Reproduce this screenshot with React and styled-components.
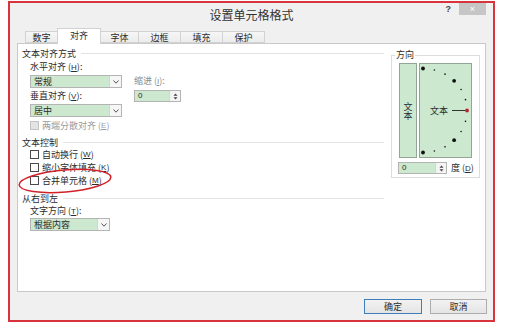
import React from "react";
import styled, { createGlobalStyle } from "styled-components";

const GREEN = "#cce8cf";

const GlobalStyle = createGlobalStyle`
  html, body {
    margin: 0;
    background: #ffffff;
  }
  body {
    font-family: "Noto Sans CJK SC", "Liberation Sans", sans-serif;
    color: #2b2b2b;
  }
`;

const Page = styled.div`
  width: 512px;
  height: 328px;
  padding: 1px 0 0 8px;
  box-sizing: border-box;
`;

const Dialog = styled.div`
  width: 487px;
  height: 321px;
  box-sizing: border-box;
  border: 2px solid #d7353b;
  background: #f0f0f0;
  display: flex;
  flex-direction: column;
`;

const TitleBar = styled.div`
  height: 22px;
  display: grid;
  grid-template-columns: 1fr auto 1fr;
  align-items: start;
`;

const Title = styled.div`
  grid-column: 2;
  font-size: 12px;
  line-height: 12px;
  margin-top: 6px;
  color: #333;
`;

const TitleTools = styled.div`
  grid-column: 3;
  display: flex;
  justify-content: flex-end;
  align-items: flex-start;
  margin-right: 7px;
`;

const Help = styled.span`
  font-family: "Liberation Sans", sans-serif;
  font-weight: bold;
  font-size: 9px;
  line-height: 12px;
  color: #444;
  margin-right: 8px;
`;

const CloseBtn = styled.div`
  width: 27px;
  height: 12px;
  background: #c6c6c6;
  color: #ffffff;
  font-family: "Liberation Sans", sans-serif;
  font-size: 9px;
  line-height: 12px;
  text-align: center;
`;

const TabRow = styled.div`
  display: flex;
  align-items: flex-end;
  height: 15px;
  margin: 3px 0 0 15px;
`;

const Tab = styled.div`
  width: ${(p) => p.$w}px;
  height: ${(p) => (p.$active ? 16 : 12)}px;
  margin-left: ${(p) => (p.$first ? 0 : -1)}px;
  margin-bottom: ${(p) => (p.$active ? -1 : 0)}px;
  box-sizing: border-box;
  border: 1px solid #d2d2d2;
  border-bottom: ${(p) => (p.$active ? "none" : "1px solid #d2d2d2")};
  background: ${(p) => (p.$active ? "#ffffff" : "linear-gradient(#f6f6f6, #ececec)")};
  position: relative;
  z-index: ${(p) => (p.$active ? 2 : 1)};
  display: flex;
  align-items: center;
  justify-content: center;
  font-size: 9px;
  padding-bottom: ${(p) => (p.$active ? 2 : 0)}px;
`;

const Panel = styled.div`
  height: 249px;
  margin: 0 7px;
  box-sizing: border-box;
  border: 1px solid #c9c9c9;
  background: #ffffff;
  display: flex;
  padding: 3px 5px 0 4px;
`;

const LeftCol = styled.div`
  width: 362px;
  display: flex;
  flex-direction: column;
`;

const SectionHead = styled.div`
  display: flex;
  align-items: center;
  height: 12px;
  margin-top: ${(p) => p.$mt || 0}px;
  font-size: 9px;
  &::after {
    content: "";
    flex: 1;
    height: 1px;
    background: #e2e2e2;
    margin-left: 5px;
  }
`;

const Indent = styled.div`
  padding-left: 8px;
  display: flex;
  flex-direction: column;
  position: relative;
`;

const AlignGrid = styled.div`
  display: grid;
  grid-template-columns: 92px auto;
  grid-template-rows: 12px 13px 12px 13px;
  column-gap: 12px;
  row-gap: 2px;
  margin-top: 2px;
  justify-items: start;
`;

const Label = styled.div`
  font-size: 9px;
  line-height: 12px;
  height: 12px;
  white-space: nowrap;
  color: ${(p) => (p.$muted ? "#8a8a8a" : "#2b2b2b")};
  margin-top: ${(p) => p.$mt || 0}px;
  & u {
    font-family: "Liberation Sans", sans-serif;
    font-size: 8px;
  }
`;

const Combo = styled.div`
  width: ${(p) => p.$w}px;
  height: 13px;
  box-sizing: border-box;
  border: 1px solid #b4b4b4;
  display: flex;
  margin-top: ${(p) => p.$mt || 0}px;
`;

const ComboField = styled.div`
  flex: 1;
  background: ${GREEN};
  font-size: 9px;
  line-height: 11px;
  padding-left: 3px;
`;

const ComboBtn = styled.div`
  width: 11px;
  border-left: 1px solid #d4d4d4;
  background: #f6f6f6;
  display: flex;
  align-items: center;
  justify-content: center;
`;

const Spin = styled.div`
  width: ${(p) => p.$w}px;
  height: 12px;
  box-sizing: border-box;
  border: 1px solid #b4b4b4;
  display: flex;
  background: #ffffff;
`;

const SpinField = styled.div`
  flex: 1;
  background: ${GREEN};
  font-family: "Liberation Sans", sans-serif;
  font-size: 8px;
  line-height: 10px;
  padding-left: 3px;
`;

const SpinBtns = styled.div`
  width: 10px;
  border-left: 1px solid #d4d4d4;
  background: #f4f4f4;
  display: flex;
  align-items: center;
  justify-content: center;
`;

const CheckRow = styled.div`
  display: flex;
  align-items: center;
  height: 13px;
  margin-top: ${(p) => p.$mt || 0}px;
  font-size: 9px;
  color: ${(p) => (p.$disabled ? "#9a9a9a" : "#2b2b2b")};
  position: relative;
  & u {
    font-family: "Liberation Sans", sans-serif;
    font-size: 8px;
  }
`;

const Box = styled.span`
  width: 9px;
  height: 9px;
  box-sizing: border-box;
  border: 1px solid ${(p) => (p.$disabled ? "#c4c4c4" : "#4a4a4a")};
  background: ${(p) => (p.$disabled ? "#e4e4e4" : "#ffffff")};
  margin-right: 3px;
`;

const Annotation = styled.svg`
  position: absolute;
  left: -13px;
  top: -6px;
  width: 96px;
  height: 26px;
  pointer-events: none;
`;

const Group = styled.fieldset`
  width: 89px;
  height: 129px;
  margin: 2px 0 0 7px;
  padding: 0 0 0 7px;
  box-sizing: border-box;
  border: 1px solid #dcdcdc;
  min-width: 0;
`;

const Legend = styled.legend`
  font-size: 9px;
  line-height: 12px;
  padding: 0 1px;
  margin-left: -4px;
`;

const DialRow = styled.div`
  display: flex;
  gap: 2px;
  margin-top: 2px;
`;

const VertBox = styled.div`
  width: 18px;
  height: 95px;
  box-sizing: border-box;
  border: 1px solid #93a595;
  background: ${GREEN};
  display: flex;
  align-items: center;
  justify-content: center;
  writing-mode: vertical-rl;
  font-size: 9px;
`;

const DialBox = styled.div`
  width: 53px;
  height: 95px;
  box-sizing: border-box;
  border: 1px solid #93a595;
  background: ${GREEN};
  & svg {
    display: block;
  }
`;

const DegreeRow = styled.div`
  display: flex;
  align-items: center;
  margin: 4px 0 0 -1px;
  gap: 4px;
`;

const Footer = styled.div`
  display: flex;
  justify-content: flex-end;
  gap: 8px;
  margin: 7px 6px 0 0;
`;

const Button = styled.div`
  width: ${(p) => p.$w}px;
  height: 15px;
  box-sizing: border-box;
  border: 1px solid ${(p) => (p.$primary ? "#3d7fb6" : "#adadad")};
  background: linear-gradient(#f2f2f2, #e4e4e4);
  font-size: 9px;
  display: flex;
  align-items: center;
  justify-content: center;
`;

const Chevron = () => (
  <svg width="6" height="4" viewBox="0 0 6 4">
    <polyline points="0.5,0.5 3,3.2 5.5,0.5" fill="none" stroke="#555" strokeWidth="1" />
  </svg>
);

const Arrows = () => (
  <svg width="5" height="7" viewBox="0 0 5 7">
    <polygon points="2.5,0.5 4.5,2.8 0.5,2.8" fill="#444" />
    <polygon points="0.5,4.2 4.5,4.2 2.5,6.5" fill="#444" />
  </svg>
);

const tabs = [
  { name: "数字", w: 33 },
  { name: "对齐", w: 44, active: true },
  { name: "字体", w: 39 },
  { name: "边框", w: 43 },
  { name: "填充", w: 43 },
  { name: "保护", w: 43 },
];

function Dial() {
  const cx = 3;
  const cy = 46.5;
  const r = 42;
  const dots = [];
  for (let a = -90; a <= 90; a += 15) {
    const rad = (a * Math.PI) / 180;
    const x = cx + (r + 2) * Math.cos(rad);
    const y = cy + r * Math.sin(rad);
    const big = a % 45 === 0;
    dots.push(
      <circle
        key={a}
        cx={x}
        cy={y}
        r={big ? 1.9 : 0.8}
        fill={a === 0 ? "#b3262b" : "#111"}
      />
    );
  }
  return (
    <svg width="51" height="93" viewBox="0 0 51 93">
      {dots}
      <text x="10" y={cy + 3.2} fontSize="9" fill="#2b2b2b" fontFamily="Noto Sans CJK SC, sans-serif">
        文本
      </text>
      <line x1="32" y1={cy} x2="45" y2={cy} stroke="#333" strokeWidth="1" />
    </svg>
  );
}

export default function App() {
  return (
    <Page>
      <GlobalStyle />
      <Dialog>
        <TitleBar>
          <Title>设置单元格格式</Title>
          <TitleTools>
            <Help>?</Help>
            <CloseBtn>×</CloseBtn>
          </TitleTools>
        </TitleBar>

        <TabRow>
          {tabs.map((t, i) => (
            <Tab key={t.name} $w={t.w} $active={t.active} $first={i === 0}>
              {t.name}
            </Tab>
          ))}
        </TabRow>

        <Panel>
          <LeftCol>
            <SectionHead>文本对齐方式</SectionHead>
            <Indent>
              <AlignGrid>
                <Label>水平对齐 (<u>H</u>):</Label>
                <span />
                <Combo $w={92}>
                  <ComboField>常规</ComboField>
                  <ComboBtn>
                    <Chevron />
                  </ComboBtn>
                </Combo>
                <Label $muted>缩进 (<u>I</u>):</Label>
                <Label>垂直对齐 (<u>V</u>):</Label>
                <Spin $w={47}>
                  <SpinField>0</SpinField>
                  <SpinBtns>
                    <Arrows />
                  </SpinBtns>
                </Spin>
                <Combo $w={92}>
                  <ComboField>居中</ComboField>
                  <ComboBtn>
                    <Chevron />
                  </ComboBtn>
                </Combo>
              </AlignGrid>
              <CheckRow $disabled $mt={2}>
                <Box $disabled />
                两端分散对齐 (<u>E</u>)
              </CheckRow>
            </Indent>

            <SectionHead $mt={4}>文本控制</SectionHead>
            <Indent>
              <CheckRow>
                <Box />
                自动换行 (<u>W</u>)
              </CheckRow>
              <CheckRow>
                <Box />
                缩小字体填充 (<u>K</u>)
              </CheckRow>
              <CheckRow>
                <Box />
                合并单元格 (<u>M</u>)
                <Annotation viewBox="0 0 96 26">
                  <ellipse
                    cx="48"
                    cy="13"
                    rx="46"
                    ry="11"
                    transform="rotate(-5 48 13)"
                    fill="none"
                    stroke="#cf2229"
                    strokeWidth="1.5"
                  />
                </Annotation>
              </CheckRow>
            </Indent>

            <SectionHead $mt={5}>从右到左</SectionHead>
            <Indent>
              <Label $mt={1}>文字方向 (<u>T</u>):</Label>
              <Combo $w={80} $mt={1}>
                <ComboField>根据内容</ComboField>
                <ComboBtn>
                  <Chevron />
                </ComboBtn>
              </Combo>
            </Indent>
          </LeftCol>

          <Group>
            <Legend>方向</Legend>
            <DialRow>
              <VertBox>文本</VertBox>
              <DialBox>
                <Dial />
              </DialBox>
            </DialRow>
            <DegreeRow>
              <Spin $w={49}>
                <SpinField>0</SpinField>
                <SpinBtns>
                  <Arrows />
                </SpinBtns>
              </Spin>
              <Label>度 (<u>D</u>)</Label>
            </DegreeRow>
          </Group>
        </Panel>

        <Footer>
          <Button $w={58} $primary>确定</Button>
          <Button $w={57}>取消</Button>
        </Footer>
      </Dialog>
    </Page>
  );
}
